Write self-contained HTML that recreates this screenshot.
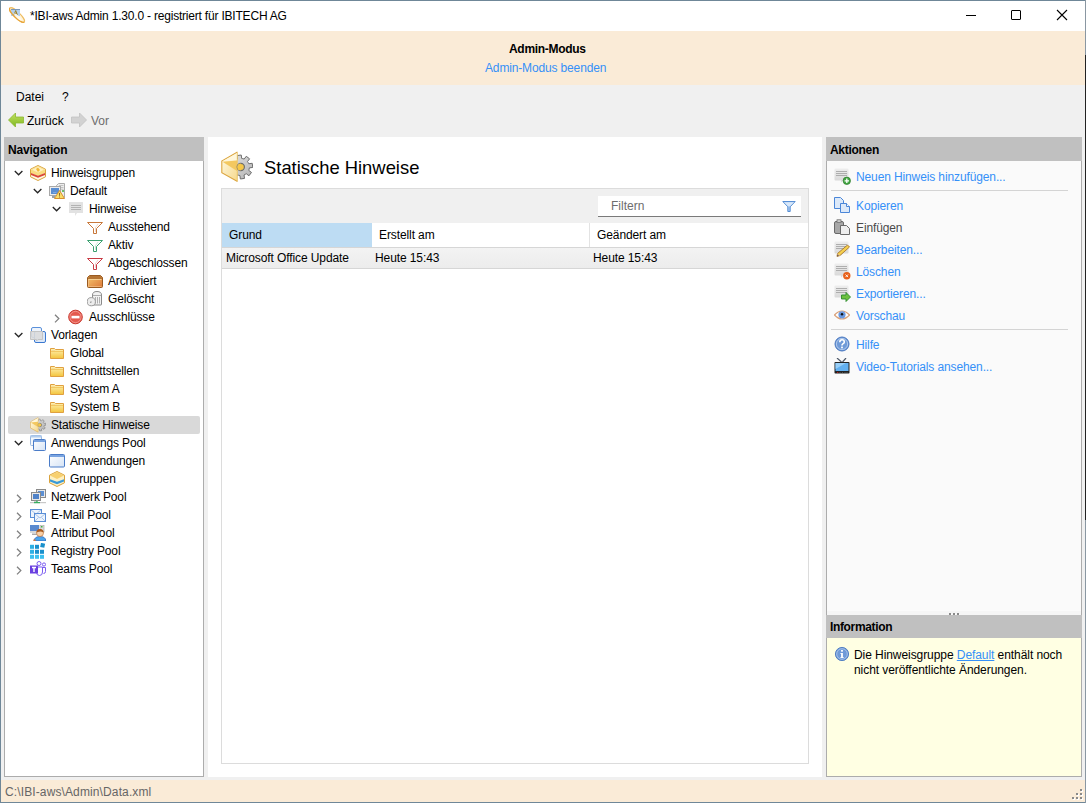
<!DOCTYPE html>
<html><head><meta charset="utf-8">
<style>
*{box-sizing:border-box;margin:0;padding:0}
html,body{width:1086px;height:803px;overflow:hidden}
body{position:relative;background:#f0f0f0;font-family:"Liberation Sans",sans-serif;font-size:12px;color:#000}
.a{position:absolute}
.t{position:absolute;white-space:nowrap;line-height:14px;height:14px}
.lnk{color:#3590f8}
.ico{position:absolute}
</style></head><body>
<svg width="0" height="0" style="position:absolute">
<defs>
<linearGradient id="gy" x1="0" y1="0" x2="0" y2="1"><stop offset="0" stop-color="#fff6cf"/><stop offset="1" stop-color="#f5c54a"/></linearGradient>
<linearGradient id="gor" x1="0" y1="0" x2="0" y2="1"><stop offset="0" stop-color="#f4b860"/><stop offset="1" stop-color="#d8782a"/></linearGradient>
<linearGradient id="gbl" x1="0" y1="0" x2="1" y2="1"><stop offset="0" stop-color="#ffffff"/><stop offset="1" stop-color="#d5e3f5"/></linearGradient>
<linearGradient id="ggr" x1="0" y1="0" x2="0" y2="1"><stop offset="0" stop-color="#eeeeee"/><stop offset="1" stop-color="#d6d6d6"/></linearGradient>
<linearGradient id="gfold" x1="0" y1="0" x2="0" y2="1"><stop offset="0" stop-color="#fff3b8"/><stop offset="1" stop-color="#f3c43c"/></linearGradient>
<symbol id="hex" viewBox="0 0 16 16">
 <path d="M8 0.5L15.5 4.2V11.8L8 15.5L0.5 11.8V4.2Z" fill="#fff8e0" stroke="#d9a23c"/>
 <path d="M1 4.5L8 1L15 4.5V8L8 11L1 8Z" fill="#f9dc80"/>
 <path d="M2 4.8L8 1.8L14 4.8L8 7.5Z" fill="#fff0c0"/>
 <path d="M6 4L8 2.5L10 5L8 7Z" fill="#f2b838"/>
 <path d="M1 8L8 10.8L15 8V10L8 12.8L1 10Z" fill="#d9463a"/>
</symbol>
<symbol id="hexb" viewBox="0 0 16 16">
 <path d="M8 0.5L15.5 4.2V11.8L8 15.5L0.5 11.8V4.2Z" fill="#fdf0c4" stroke="#d9a23c"/>
 <path d="M1 4.5L8 1L15 4.5L8 8Z" fill="#f7d070"/>
 <path d="M1 8.2L8 10.8L15 8.2V10.5L8 13.2L1 10.5Z" fill="#3a9ad8"/>
</symbol>
<symbol id="default" viewBox="0 0 16 16">
 <path d="M9.5 0.5H15.5V14.5H7.5V2.5Z" fill="#eeeeee" stroke="#ababab"/>
 <rect x="10" y="2" width="4.5" height="0.8" fill="#b8b8b8"/><rect x="11" y="4" width="3.5" height="0.8" fill="#b8b8b8"/><rect x="11" y="5.8" width="3.5" height="0.8" fill="#b8b8b8"/>
 <circle cx="14" cy="8" r="1" fill="#3cb040"/>
 <rect x="0.5" y="3.5" width="11" height="9" fill="#ececec" stroke="#a8a8a8"/>
 <rect x="2" y="5" width="8" height="6" fill="#5a8ed2"/>
 <rect x="4" y="9.2" width="3.5" height="0.6" fill="#9ab8e8"/>
 <rect x="3" y="13" width="3" height="2" fill="#9aa0a8"/>
 <path d="M10.5 7.5L15.5 15.5H5.5Z" fill="#f8de68" stroke="#d8902e" stroke-linejoin="round"/>
 <rect x="10" y="10" width="1" height="2.8" fill="#9a6a20"/><rect x="10" y="13.5" width="1" height="1" fill="#9a6a20"/>
</symbol>
<symbol id="bubble" viewBox="0 0 16 16">
 <path d="M1.5 1H14.5Q15 1 15 1.5V11.5Q15 12 14.5 12H9L7 15V12H1.5Q1 12 1 11.5V1.5Q1 1 1.5 1Z" fill="#e2e2e2"/>
 <rect x="3" y="4" width="10" height="1" fill="#b3b3b3"/><rect x="3" y="6" width="10" height="1" fill="#b3b3b3"/><rect x="3" y="8" width="10" height="1" fill="#b3b3b3"/>
</symbol>
<symbol id="funnel" viewBox="0 0 16 16">
 <path d="M0.5 3.5H15.5L9.5 9.5V14.5H6.5V9.5Z" fill="#fff" stroke="currentColor" stroke-width="1" stroke-linejoin="miter"/>
 <path d="M11 5L8.5 8.5V13" stroke="currentColor" stroke-opacity="0.25" fill="none"/>
</symbol>
<symbol id="archive" viewBox="0 0 16 16">
 <defs><linearGradient id="garch" x1="0" y1="0" x2="1" y2="1"><stop offset="0" stop-color="#f6c870"/><stop offset="1" stop-color="#dc7838"/></linearGradient></defs>
 <path d="M2.5 2.5H13.5L15.5 4.5V13.5Q15.5 14.5 14.5 14.5H1.5Q0.5 14.5 0.5 13.5V4.5Z" fill="url(#garch)" stroke="#9a5a20"/>
 <path d="M1 4.5L2.5 3H13.5L15 4.5V6H1Z" fill="#b47434"/>
 <path d="M1.5 6.5H14.5" stroke="#f8d8a0" stroke-width="0.8"/>
 <path d="M1.5 6.5V13.5H14.5" fill="none" stroke="#f6c890" stroke-width="0.6"/>
</symbol>
<symbol id="trash" viewBox="0 0 16 16">
 <path d="M5.5 13.5V4Q5.5 0.5 10 0.5Q14.5 0.5 14.5 4V13.5Q14.5 14 14 14H6Q5.5 14 5.5 13.5Z" fill="#f2f2f2" stroke="#8a8a8a"/>
 <path d="M5.5 4.5H14.5" stroke="#9a9a9a" stroke-width="0.8"/>
 <path d="M8.5 6V12.5M10.5 6V12.5M12.5 6V12.5" stroke="#a8a8a8" stroke-width="0.9"/>
 <circle cx="4.3" cy="10.7" r="4.1" fill="#ececec" stroke="#9a9a9a"/>
 <path d="M3 11.3L4.6 11" stroke="#7a7a7a" stroke-width="0.9"/>
</symbol>
<symbol id="nogo" viewBox="0 0 16 16">
 <circle cx="7.5" cy="8" r="6.8" fill="#e45a4e" stroke="#c83a30"/>
 <circle cx="7.5" cy="8" r="5.6" fill="none" stroke="#f5a098" stroke-width="0.8"/>
 <rect x="3.5" y="6.8" width="8" height="2.6" fill="#fff"/>
</symbol>
<symbol id="vorlagen" viewBox="0 0 16 16">
 <rect x="1.5" y="0.5" width="10" height="10" rx="1.5" fill="#eef4fc" stroke="#5a90da"/>
 <rect x="4.5" y="4.5" width="11" height="11" rx="1.5" fill="#dce8f8" stroke="#3a78d0"/>
 <path d="M0.5 4.5H12.5V12.5H8L6.5 14V12.5H0.5Z" fill="#dcdcdc" fill-opacity="0.9" stroke="#c4c4c4"/>
</symbol>
<symbol id="folder" viewBox="0 0 16 16">
 <path d="M1.5 3.5H5.5L6.5 4.5H14.5V13.5H1.5Z" fill="url(#gfold)" stroke="#e0a040"/>
 <path d="M2 6.5H14" stroke="#f2c862"/>
 <rect x="2.5" y="5" width="3.5" height="1" fill="#f5dc98"/>
</symbol>
<symbol id="statisch" viewBox="0 0 32 32">
<defs><linearGradient id="gbox" x1="0" y1="0" x2="1" y2="1"><stop offset="0" stop-color="#fffbe8"/><stop offset="1" stop-color="#f6d88a"/></linearGradient>
<linearGradient id="ggear" x1="0" y1="0" x2="1" y2="1"><stop offset="0" stop-color="#e2e2e2"/><stop offset="1" stop-color="#b4b4b4"/></linearGradient></defs>
<path d="M15.50 8.55 L16.58 8.03 L16.09 4.59 L20.22 4.01 L20.70 7.45 L21.88 7.66 L22.03 7.69 L23.16 8.08 L25.25 5.31 L28.58 7.82 L26.48 10.59 L27.17 11.57 L27.25 11.70 L27.77 12.78 L31.21 12.29 L31.79 16.42 L28.35 16.90 L28.14 18.08 L28.11 18.23 L27.72 19.36 L30.49 21.45 L27.98 24.78 L25.21 22.68 L24.23 23.37 L24.10 23.45 L23.02 23.97 L23.51 27.41 L19.38 27.99 L18.90 24.55 L17.72 24.34 L17.57 24.31 L16.44 23.92 L14.35 26.69 L11.02 24.18 L13.12 21.41 L12.43 20.43 L12.35 20.30 L11.83 19.22 L8.39 19.71 L7.81 15.58 L11.25 15.10 L11.46 13.92 L11.49 13.77 L11.88 12.64 L9.11 10.55 L11.62 7.22 L14.39 9.32 L15.37 8.63Z" fill="url(#ggear)" stroke="#6e6e6e" stroke-width="1"/>
<path d="M0.8 10L16.5 1V30.5L0.8 21.8Z" fill="url(#gbox)"/><path d="M16.5 1L0.8 10V21.8L16.5 30.5" fill="none" stroke="#dba540" stroke-width="1.1"/>
<path d="M1.5 10.3L16 2V9.5Z" fill="#fff7dc"/>
<path d="M1.5 10.8L16 9.5V20Z" fill="#f3c860"/>
<path d="M16.3 2L16.3 30" stroke="#e8c060" stroke-width="0.8"/>
<circle cx="19.8" cy="16" r="3.6" fill="#f6c848" stroke="#6e6e6e" stroke-width="1.2"/>
<path d="M19.8 12.4A3.6 3.6 0 0 0 19.8 19.6Z" fill="#f6c848"/>
</symbol>
<symbol id="winstack" viewBox="0 0 16 16">
 <rect x="0.5" y="0.5" width="11" height="10" rx="1" fill="#f4f8fd" stroke="#98b8e0"/>
 <rect x="0.5" y="0.5" width="11" height="2" fill="#b0ccee"/>
 <rect x="3.5" y="4.5" width="12" height="11" rx="1" fill="url(#gbl)" stroke="#4a7cc8"/>
 <rect x="4" y="5" width="11" height="2" fill="#7aa4e0"/>
</symbol>
<symbol id="window" viewBox="0 0 16 16">
 <rect x="0.5" y="1.5" width="15" height="12.5" rx="1" fill="url(#gbl)" stroke="#4a7cc8"/>
 <rect x="1" y="2" width="14" height="2" fill="#7aa4e0"/>
</symbol>
<symbol id="network" viewBox="0 0 16 16">
 <rect x="6.5" y="0.5" width="9" height="8" fill="#e8e8e8" stroke="#8a8a8a"/>
 <rect x="8" y="2" width="6" height="5" fill="#5b8fd4"/>
 <rect x="1.5" y="3.5" width="9" height="8" fill="#e8e8e8" stroke="#8a8a8a"/>
 <rect x="3" y="5" width="6" height="5" fill="#4f82c8"/>
 <rect x="4" y="11.5" width="4" height="1" fill="#999"/>
 <rect x="0" y="13" width="16" height="1.2" fill="#c8c8c8"/>
 <rect x="4" y="13" width="6" height="1.2" fill="#38b060"/>
 <rect x="6.3" y="11.5" width="1.2" height="2" fill="#38b060"/>
</symbol>
<symbol id="mail" viewBox="0 0 16 16">
 <rect x="0.5" y="2.5" width="11" height="8" fill="#eef4fc" stroke="#5a8ed6"/>
 <path d="M1 3L6 7L11 3" fill="none" stroke="#a8c4ea"/>
 <rect x="4.5" y="6.5" width="11" height="8" fill="#eef4fc" stroke="#5a8ed6"/>
 <path d="M5 7L10 11L15 7M5 14L8.5 10.5M15 14L11.5 10.5" fill="none" stroke="#a8c4ea"/>
</symbol>
<symbol id="person" viewBox="0 0 16 16">
 <rect x="0" y="0" width="9" height="6" fill="#5a8ad0"/>
 <rect x="0" y="6" width="9" height="2" fill="#d8d8d8"/>
 <rect x="2" y="8.5" width="5" height="1.5" fill="#aaa"/>
 <rect x="10" y="0" width="4" height="7" fill="#ddd" stroke="#999" stroke-width="0.6"/>
 <rect x="11" y="1" width="1.5" height="1.5" fill="#40b040"/>
 <path d="M4 16Q4.5 11.5 10 11.5Q15.5 11.5 16 16Z" fill="#4aa4ec" stroke="#2a66c0" stroke-width="0.8"/>
 <circle cx="10" cy="8" r="3.5" fill="#f8d0a8" stroke="#b06a30" stroke-width="0.6"/>
 <path d="M6.5 7.5Q6.5 4 10 4Q13.5 4 13.5 7.5Q11 6 8 7Z" fill="#a85a20"/>
 <rect x="3.5" y="14.5" width="2" height="1.5" fill="#e07830"/>
</symbol>
<symbol id="registry" viewBox="0 0 16 16">
 <rect x="0" y="1.8" width="4" height="4" fill="#2eb0e4"/>
 <rect x="5" y="1.8" width="4" height="4" fill="#1a90cc"/>
 <g transform="rotate(12 12.5 2.5)"><rect x="10.5" y="0.2" width="4.2" height="4.2" fill="#1a90cc"/></g>
 <rect x="0" y="6.8" width="4" height="4" fill="#2eb0e4"/>
 <rect x="5" y="6.8" width="4" height="4" fill="#1a90cc"/>
 <rect x="10" y="6.8" width="4" height="4" fill="#1a90cc"/>
 <rect x="0" y="11.8" width="4" height="4" fill="#3cc0f0"/>
 <rect x="5" y="11.8" width="4" height="4" fill="#3cc0f0"/>
 <rect x="10" y="11.8" width="4" height="4" fill="#3cc0f0"/>
</symbol>
<symbol id="teams" viewBox="0 0 16 16">
 <circle cx="9" cy="2.5" r="2" fill="none" stroke="#7b5cf0" stroke-width="1"/>
 <circle cx="14" cy="3.5" r="1.6" fill="none" stroke="#7b5cf0" stroke-width="1"/>
 <path d="M6.5 6H12.5V11Q12.5 14.5 9.5 14.5Q6.5 14.5 6.5 11Z" fill="#fff" stroke="#7b5cf0"/>
 <path d="M12.5 6.5H15.5V10.5Q15.5 12.5 13.5 12.5" fill="none" stroke="#7b5cf0"/>
 <rect x="0" y="4.5" width="8" height="8" fill="#6a3fe0"/>
 <path d="M2 6.5H6M4 6.5V11" stroke="#fff" stroke-width="1.4"/>
</symbol>
<symbol id="doclines" viewBox="0 0 16 16">
 <path d="M1.5 0.5H13.5Q14.5 0.5 14.5 1.5V11.5Q14.5 12.5 13.5 12.5H9L7 14.5V12.5H1.5Q0.5 12.5 0.5 11.5V1.5Q0.5 0.5 1.5 0.5Z" fill="url(#ggr)"/>
 <rect x="2" y="3" width="11" height="0.9" fill="#a8a8a8"/><rect x="2" y="5" width="11" height="0.9" fill="#a8a8a8"/><rect x="2" y="7" width="11" height="0.9" fill="#a8a8a8"/>
</symbol>
<symbol id="copy" viewBox="0 0 16 16">
 <path d="M0.5 0.5H6.5L9.5 3.5V11.5H0.5Z" fill="#dce9f9" stroke="#4a86d8"/>
 <path d="M6.5 6.5H12.5L15.5 9.5V15.5H6.5Z" fill="#dce9f9" stroke="#4a86d8"/>
 <path d="M12.5 6.5V9.5H15.5" fill="#fff" stroke="#4a86d8"/>
</symbol>
<symbol id="paste" viewBox="0 0 16 16">
 <rect x="0.5" y="2.5" width="9" height="12" rx="1.5" fill="#a8a8a8" stroke="#6a6a6a"/>
 <rect x="3" y="0.8" width="4" height="2.5" fill="#d8d8d8" stroke="#6a6a6a" stroke-width="0.8"/>
 <path d="M6.5 6.5H12.5L15.5 9.5V15.5H6.5Z" fill="#eeeeee" stroke="#6a6a6a"/>
</symbol>
<symbol id="pencil" viewBox="0 0 16 16">
 <path d="M13.5 4L15.5 6L6 14.5L3 15.5L3.5 12.5Z" fill="#f5d050" stroke="#a06a20" stroke-width="0.8"/>
 <path d="M3.5 12.5L3 15.5L6 14.5Z" fill="#f0c8a0"/>
 <path d="M3 15.5L3.8 13.3L4.8 14.6Z" fill="#403020"/>
</symbol>
<symbol id="eye" viewBox="0 0 16 16">
 <path d="M0.5 8Q8 0 15.5 8Q8 16 0.5 8Z" fill="#fff" stroke="#d8a078" stroke-width="1.2"/>
 <circle cx="8" cy="7.8" r="3.6" fill="#6a98e0"/>
 <circle cx="8" cy="7.3" r="1.2" fill="#111"/>
</symbol>
<symbol id="help" viewBox="0 0 16 16">
 <circle cx="8" cy="8" r="7" fill="#6f9ad8" stroke="#4a78c0" stroke-width="1"/>
 <circle cx="8" cy="8" r="5.6" fill="none" stroke="#c8daf2" stroke-width="0.7"/>
 <path d="M5.8 6.2Q5.8 3.8 8 3.8Q10.3 3.8 10.3 6Q10.3 7.2 8.8 7.9Q8 8.4 8 9.6" fill="none" stroke="#fff" stroke-width="1.6"/>
 <rect x="7.1" y="10.6" width="1.8" height="1.7" fill="#fff"/>
</symbol>
<symbol id="tv" viewBox="0 0 16 16">
 <path d="M3 0L7.5 4M12 0L8.5 4" stroke="#505a6a" stroke-width="1.2"/>
 <rect x="0.5" y="4" width="15" height="11.5" rx="0.8" fill="#222"/>
 <rect x="1.5" y="5" width="13" height="8" fill="#62b0f0"/>
 <path d="M1.5 5H12L1.5 11Z" fill="#98cff8"/>
 <rect x="3" y="14" width="1.3" height="0.8" fill="#e02020"/>
 <rect x="5.5" y="14" width="1" height="0.6" fill="#777"/><rect x="8" y="14" width="1" height="0.6" fill="#777"/><rect x="10.5" y="14" width="1" height="0.6" fill="#777"/><rect x="12.5" y="14" width="1" height="0.6" fill="#777"/>
</symbol>
</defs></svg>


<!-- window borders -->
<div class="a" style="left:0;top:0;width:1086px;height:1px;background:#6f8798"></div>
<div class="a" style="left:0;top:0;width:1px;height:803px;background:#6f8798"></div>
<div class="a" style="left:0;top:802px;width:1086px;height:1px;background:#6f8798"></div>
<div class="a" style="left:1085px;top:0;width:1px;height:803px;background:#8a97a2"></div>
<div class="a" style="left:1085px;top:55px;width:1px;height:465px;background:#222"></div>

<!-- title bar -->
<div class="a" style="left:1px;top:1px;width:1084px;height:30px;background:#fff"></div>
<svg class="a" style="left:9px;top:7px" width="17" height="17" viewBox="0 0 17 17"><g transform="rotate(44 8 8)"><ellipse cx="8" cy="8" rx="10" ry="2.9" fill="#fff4d8" stroke="#eebc60" stroke-width="1.1"/></g><rect x="2" y="2" width="9" height="7" fill="#b4d0ee"/><rect x="2" y="2" width="9" height="1" fill="#7a98b8"/><path d="M5 8L6.7 3.5L8.4 8M5.6 6.6H7.8" stroke="#a08020" stroke-width="1" fill="none"/><g transform="rotate(44 8 8)"><path d="M-2 8A10 2.9 0 0 0 18 8" fill="none" stroke="#e8a438" stroke-width="1.3"/><ellipse cx="10" cy="8.9" rx="5" ry="1.3" fill="#fffaf0" opacity="0.9"/></g></svg>
<div id="title" class="t" style="left:30px;top:9px;letter-spacing:-0.2px">*IBI-aws Admin 1.30.0 - registriert für IBITECH AG</div>
<!-- window controls -->
<div class="a" style="left:966px;top:15px;width:10px;height:1px;background:#000"></div>
<div class="a" style="left:1011px;top:10px;width:10px;height:10px;border:1px solid #000;border-radius:1px"></div>
<svg class="a" style="left:1056px;top:9px" width="12" height="12" viewBox="0 0 12 12"><path d="M1 1L11 11M11 1L1 11" stroke="#000" stroke-width="1.1"/></svg>

<!-- admin banner -->
<div class="a" style="left:1px;top:31px;width:1084px;height:54px;background:#faebd7"></div>
<div class="t" style="left:509px;top:42px;font-weight:bold;letter-spacing:-0.3px">Admin-Modus</div>
<div class="t lnk" style="left:485px;top:61px;letter-spacing:-0.15px">Admin-Modus beenden</div>

<!-- menu -->
<div class="t" style="left:16px;top:90px">Datei</div>
<div class="t" style="left:62px;top:90px">?</div>

<!-- toolbar -->
<svg class="a" style="left:8px;top:112px" width="16" height="16" viewBox="0 0 16 16"><defs><linearGradient id="garr" x1="0" y1="0" x2="0" y2="1"><stop offset="0" stop-color="#c4e060"/><stop offset="1" stop-color="#7cb820"/></linearGradient></defs><path d="M0.5 8L7.5 1V5H15.5V11H7.5V15Z" fill="url(#garr)" stroke="#8ab830" stroke-width="0.8" stroke-linejoin="round"/></svg>
<div class="t" style="left:27px;top:114px">Zurück</div>
<svg class="a" style="left:71px;top:112px" width="16" height="16" viewBox="0 0 16 16"><path d="M15.5 8L8.5 1V5H0.5V11H8.5V15Z" fill="#d2d2d2" stroke="#c2c2c2" stroke-width="0.8" stroke-linejoin="round"/></svg>
<div class="t" style="left:91px;top:114px;color:#6d6d6d">Vor</div>

<!-- navigation panel -->
<div class="a" style="left:4px;top:137px;width:200px;height:640px;background:#fff;border:1px solid #acacac;border-top:none"></div>
<div class="a" style="left:4px;top:137px;width:200px;height:24px;background:#c0c0c0"></div>
<div class="t" style="left:8px;top:143px;font-weight:bold;letter-spacing:-0.2px">Navigation</div>
<svg class="a" style="left:14px;top:170px" width="10" height="7" viewBox="0 0 10 7"><path d="M0.8 1L4.6 4.8L8.4 1" fill="none" stroke="#262626" stroke-width="1.3"/></svg>
<svg class="a" style="left:30px;top:165px;" width="16" height="16"><use href="#hex"/></svg>
<div class="t" style="left:51px;top:166px;letter-spacing:-0.15px">Hinweisgruppen</div>
<svg class="a" style="left:33px;top:188px" width="10" height="7" viewBox="0 0 10 7"><path d="M0.8 1L4.6 4.8L8.4 1" fill="none" stroke="#262626" stroke-width="1.3"/></svg>
<svg class="a" style="left:49px;top:183px;" width="16" height="16"><use href="#default"/></svg>
<div class="t" style="left:70px;top:184px;letter-spacing:-0.15px">Default</div>
<svg class="a" style="left:52px;top:206px" width="10" height="7" viewBox="0 0 10 7"><path d="M0.8 1L4.6 4.8L8.4 1" fill="none" stroke="#262626" stroke-width="1.3"/></svg>
<svg class="a" style="left:68px;top:201px;" width="16" height="16"><use href="#bubble"/></svg>
<div class="t" style="left:89px;top:202px;letter-spacing:-0.15px">Hinweise</div>
<svg class="a" style="left:87px;top:219px;color:#c8783a" width="16" height="16"><use href="#funnel"/></svg>
<div class="t" style="left:108px;top:220px;letter-spacing:-0.15px">Ausstehend</div>
<svg class="a" style="left:87px;top:237px;color:#3aa070" width="16" height="16"><use href="#funnel"/></svg>
<div class="t" style="left:108px;top:238px;letter-spacing:-0.15px">Aktiv</div>
<svg class="a" style="left:87px;top:255px;color:#c83a44" width="16" height="16"><use href="#funnel"/></svg>
<div class="t" style="left:108px;top:256px;letter-spacing:-0.15px">Abgeschlossen</div>
<svg class="a" style="left:87px;top:273px;" width="16" height="16"><use href="#archive"/></svg>
<div class="t" style="left:108px;top:274px;letter-spacing:-0.15px">Archiviert</div>
<svg class="a" style="left:87px;top:291px;" width="16" height="16"><use href="#trash"/></svg>
<div class="t" style="left:108px;top:292px;letter-spacing:-0.15px">Gelöscht</div>
<svg class="a" style="left:54px;top:314px" width="7" height="10" viewBox="0 0 7 10"><path d="M1 0.8L4.8 4.6L1 8.4" fill="none" stroke="#808080" stroke-width="1.3"/></svg>
<svg class="a" style="left:68px;top:309px;" width="16" height="16"><use href="#nogo"/></svg>
<div class="t" style="left:89px;top:310px;letter-spacing:-0.15px">Ausschlüsse</div>
<svg class="a" style="left:14px;top:332px" width="10" height="7" viewBox="0 0 10 7"><path d="M0.8 1L4.6 4.8L8.4 1" fill="none" stroke="#262626" stroke-width="1.3"/></svg>
<svg class="a" style="left:30px;top:327px;" width="16" height="16"><use href="#vorlagen"/></svg>
<div class="t" style="left:51px;top:328px;letter-spacing:-0.15px">Vorlagen</div>
<svg class="a" style="left:49px;top:345px;" width="16" height="16"><use href="#folder"/></svg>
<div class="t" style="left:70px;top:346px;letter-spacing:-0.15px">Global</div>
<svg class="a" style="left:49px;top:363px;" width="16" height="16"><use href="#folder"/></svg>
<div class="t" style="left:70px;top:364px;letter-spacing:-0.15px">Schnittstellen</div>
<svg class="a" style="left:49px;top:381px;" width="16" height="16"><use href="#folder"/></svg>
<div class="t" style="left:70px;top:382px;letter-spacing:-0.15px">System A</div>
<svg class="a" style="left:49px;top:399px;" width="16" height="16"><use href="#folder"/></svg>
<div class="t" style="left:70px;top:400px;letter-spacing:-0.15px">System B</div>
<div class="a" style="left:8px;top:416px;width:192px;height:18px;background:#d9d9d9;border-radius:2px"></div>
<svg class="a" style="left:30px;top:417px;" width="16" height="16"><use href="#statisch"/></svg>
<div class="t" style="left:51px;top:418px;letter-spacing:-0.15px">Statische Hinweise</div>
<svg class="a" style="left:14px;top:440px" width="10" height="7" viewBox="0 0 10 7"><path d="M0.8 1L4.6 4.8L8.4 1" fill="none" stroke="#262626" stroke-width="1.3"/></svg>
<svg class="a" style="left:30px;top:435px;" width="16" height="16"><use href="#winstack"/></svg>
<div class="t" style="left:51px;top:436px;letter-spacing:-0.15px">Anwendungs Pool</div>
<svg class="a" style="left:49px;top:453px;" width="16" height="16"><use href="#window"/></svg>
<div class="t" style="left:70px;top:454px;letter-spacing:-0.15px">Anwendungen</div>
<svg class="a" style="left:49px;top:471px;" width="16" height="16"><use href="#hexb"/></svg>
<div class="t" style="left:70px;top:472px;letter-spacing:-0.15px">Gruppen</div>
<svg class="a" style="left:16px;top:494px" width="7" height="10" viewBox="0 0 7 10"><path d="M1 0.8L4.8 4.6L1 8.4" fill="none" stroke="#808080" stroke-width="1.3"/></svg>
<svg class="a" style="left:30px;top:489px;" width="16" height="16"><use href="#network"/></svg>
<div class="t" style="left:51px;top:490px;letter-spacing:-0.15px">Netzwerk Pool</div>
<svg class="a" style="left:16px;top:512px" width="7" height="10" viewBox="0 0 7 10"><path d="M1 0.8L4.8 4.6L1 8.4" fill="none" stroke="#808080" stroke-width="1.3"/></svg>
<svg class="a" style="left:30px;top:507px;" width="16" height="16"><use href="#mail"/></svg>
<div class="t" style="left:51px;top:508px;letter-spacing:-0.15px">E-Mail Pool</div>
<svg class="a" style="left:16px;top:530px" width="7" height="10" viewBox="0 0 7 10"><path d="M1 0.8L4.8 4.6L1 8.4" fill="none" stroke="#808080" stroke-width="1.3"/></svg>
<svg class="a" style="left:30px;top:525px;" width="16" height="16"><use href="#person"/></svg>
<div class="t" style="left:51px;top:526px;letter-spacing:-0.15px">Attribut Pool</div>
<svg class="a" style="left:16px;top:548px" width="7" height="10" viewBox="0 0 7 10"><path d="M1 0.8L4.8 4.6L1 8.4" fill="none" stroke="#808080" stroke-width="1.3"/></svg>
<svg class="a" style="left:30px;top:543px;" width="16" height="16"><use href="#registry"/></svg>
<div class="t" style="left:51px;top:544px;letter-spacing:-0.15px">Registry Pool</div>
<svg class="a" style="left:16px;top:566px" width="7" height="10" viewBox="0 0 7 10"><path d="M1 0.8L4.8 4.6L1 8.4" fill="none" stroke="#808080" stroke-width="1.3"/></svg>
<svg class="a" style="left:30px;top:561px;" width="16" height="16"><use href="#teams"/></svg>
<div class="t" style="left:51px;top:562px;letter-spacing:-0.15px">Teams Pool</div>

<!-- middle panel -->
<div class="a" style="left:208px;top:137px;width:614px;height:640px;background:#fff"></div>
<svg class="a" style="left:221px;top:151px" width="32" height="32"><use href="#statisch"/></svg>
<div class="t" style="left:264px;top:157px;font-size:18.4px;line-height:22px;height:22px">Statische Hinweise</div>
<div class="a" style="left:221px;top:188px;width:588px;height:576px;border:1px solid #dcdcdc;background:#fff"></div>
<div class="a" style="left:222px;top:189px;width:586px;height:34px;background:#f0f0f0"></div>
<div class="a" style="left:598px;top:196px;width:203px;height:21px;background:#fff;border-bottom:1px solid #7a7a7a"></div>
<div class="t" style="left:611px;top:199px;color:#6d6d6d">Filtern</div>
<svg class="a" style="left:782px;top:200px" width="14" height="13" viewBox="0 0 14 13"><path d="M0.8 1.5H13.2L8.2 6.8V11.5H5.8V6.8Z" fill="#a8c8f0" stroke="#4a86d0" stroke-width="0.9"/><path d="M2 2.2H12L8 6.2H6Z" fill="#d8e8fa"/></svg>
<!-- header row -->
<div class="a" style="left:222px;top:223px;width:150px;height:24px;background:#bddcf3"></div>
<div class="a" style="left:372px;top:223px;width:436px;height:24px;background:#fff"></div>
<div class="a" style="left:589px;top:223px;width:1px;height:24px;background:#e3e3e3"></div>
<div class="a" style="left:222px;top:247px;width:586px;height:1px;background:#d6d6d6"></div>
<div class="t" style="left:229px;top:228px;letter-spacing:-0.1px">Grund</div>
<div class="t" style="left:379px;top:228px;letter-spacing:-0.1px">Erstellt am</div>
<div class="t" style="left:597px;top:228px;letter-spacing:-0.1px">Geändert am</div>
<!-- data row -->
<div class="a" style="left:222px;top:248px;width:586px;height:20px;background:linear-gradient(#f3f3f3,#ececec)"></div>
<div class="a" style="left:222px;top:268px;width:586px;height:1px;background:#d6d6d6"></div>
<div class="t" style="left:226px;top:251px;letter-spacing:-0.1px">Microsoft Office Update</div>
<div class="t" style="left:375px;top:251px;letter-spacing:-0.1px">Heute 15:43</div>
<div class="t" style="left:593px;top:251px;letter-spacing:-0.1px">Heute 15:43</div>

<!-- actions panel -->
<div class="a" style="left:826px;top:137px;width:256px;height:478px;background:#fafafa;border-left:1px solid #acacac;border-right:1px solid #acacac"></div>
<div class="a" style="left:826px;top:137px;width:256px;height:24px;background:#c0c0c0"></div>
<div class="t" style="left:830px;top:143px;font-weight:bold;letter-spacing:-0.3px">Aktionen</div>
<svg class="a" style="left:834px;top:168px;" width="16" height="16"><use href="#doclines"/></svg>
<svg class="a" style="left:842px;top:176px" width="9" height="9" viewBox="0 0 9 9"><circle cx="4.8" cy="4.8" r="3.7" fill="#45a845" stroke="#2a7a2a" stroke-width="0.7"/><path d="M4.8 2.6V7M2.6 4.8H7" stroke="#fff" stroke-width="1.3"/></svg>
<div class="t lnk" style="left:856px;top:170px;letter-spacing:-0.12px">Neuen Hinweis hinzufügen...</div>
<svg class="a" style="left:834px;top:197px;" width="16" height="16"><use href="#copy"/></svg>
<div class="t lnk" style="left:856px;top:199px;letter-spacing:-0.12px">Kopieren</div>
<svg class="a" style="left:834px;top:219px;" width="16" height="16"><use href="#paste"/></svg>
<div class="t" style="left:856px;top:221px;color:#4a4a4a;letter-spacing:-0.12px">Einfügen</div>
<svg class="a" style="left:834px;top:241px;" width="16" height="16"><use href="#doclines"/></svg>
<svg class="a" style="left:834px;top:241px;" width="16" height="16"><use href="#pencil"/></svg>
<div class="t lnk" style="left:856px;top:243px;letter-spacing:-0.12px">Bearbeiten...</div>
<svg class="a" style="left:834px;top:263px;" width="16" height="16"><use href="#doclines"/></svg>
<svg class="a" style="left:842px;top:271px" width="9" height="9" viewBox="0 0 9 9"><circle cx="4.8" cy="4.8" r="3.7" fill="#e8601a"/><path d="M3.5 3.5L6.1 6.1M6.1 3.5L3.5 6.1" stroke="#fff" stroke-width="0.9"/></svg>
<div class="t lnk" style="left:856px;top:265px;letter-spacing:-0.12px">Löschen</div>
<svg class="a" style="left:834px;top:285px;" width="16" height="16"><use href="#doclines"/></svg>
<svg class="a" style="left:841px;top:292px" width="10" height="10" viewBox="0 0 10 10"><path d="M0.5 3H5V0.5L9.5 5L5 9.5V7H0.5Z" fill="#6cc040" stroke="#2a8a2a" stroke-width="0.9"/></svg>
<div class="t lnk" style="left:856px;top:287px;letter-spacing:-0.12px">Exportieren...</div>
<svg class="a" style="left:834px;top:307px;" width="16" height="16"><use href="#eye"/></svg>
<div class="t lnk" style="left:856px;top:309px;letter-spacing:-0.12px">Vorschau</div>
<svg class="a" style="left:834px;top:336px;" width="16" height="16"><use href="#help"/></svg>
<div class="t lnk" style="left:856px;top:338px;letter-spacing:-0.12px">Hilfe</div>
<svg class="a" style="left:834px;top:358px;" width="16" height="16"><use href="#tv"/></svg>
<div class="t lnk" style="left:856px;top:360px;letter-spacing:-0.12px">Video-Tutorials ansehen...</div>
<div class="a" style="left:831px;top:190px;width:237px;height:1px;background:#d4d4d4"></div>
<div class="a" style="left:831px;top:329px;width:237px;height:1px;background:#d4d4d4"></div>
<div class="a" style="left:827px;top:611px;width:254px;height:4px;background:#f5f5f5"></div>

<svg class="a" style="left:948px;top:612px" width="12" height="4"><g fill="#fff"><rect x="2" y="2" width="2" height="2"/><rect x="6" y="2" width="2" height="2"/><rect x="10" y="2" width="2" height="2"/></g><g fill="#8a8a8a"><rect x="1" y="1" width="2" height="2"/><rect x="5" y="1" width="2" height="2"/><rect x="9" y="1" width="2" height="2"/></g></svg>
<!-- information panel -->
<div class="a" style="left:826px;top:615px;width:256px;height:162px;background:#ffffe3;border:1px solid #acacac;border-top:none"></div>
<div class="a" style="left:826px;top:615px;width:256px;height:23px;background:#c0c0c0"></div>
<div class="t" style="left:830px;top:620px;font-weight:bold;letter-spacing:-0.35px">Information</div>
<svg class="a" style="left:834px;top:646px" width="16" height="16" viewBox="0 0 16 16"><circle cx="8" cy="8" r="6.6" fill="#6f9ad8" stroke="#4a78c0" stroke-width="0.9"/><circle cx="8" cy="8" r="5.3" fill="none" stroke="#c8daf2" stroke-width="0.6"/><rect x="7.1" y="4" width="1.8" height="1.7" fill="#fff"/><path d="M6.3 7H8.9V11.2H9.8V12H6.3V11.2H7.1V7.8H6.3Z" fill="#fff"/></svg>
<div class="t" style="left:854px;top:648px;line-height:15px;height:auto;letter-spacing:-0.07px">Die Hinweisgruppe <span class="lnk" style="text-decoration:underline">Default</span> enthält noch<br>nicht veröffentlichte Änderungen.</div>

<!-- status bar -->
<div class="a" style="left:1px;top:780px;width:1084px;height:22px;background:#faebd7"></div>
<div class="t" style="left:5px;top:785px;color:#666;letter-spacing:0.12px">C:\IBI-aws\Admin\Data.xml</div>
<svg class="a" style="left:1071px;top:788px" width="14" height="14"><g fill="#fff"><rect x="10" y="2" width="2" height="2"/><rect x="6" y="6" width="2" height="2"/><rect x="10" y="6" width="2" height="2"/><rect x="2" y="10" width="2" height="2"/><rect x="6" y="10" width="2" height="2"/><rect x="10" y="10" width="2" height="2"/></g><g fill="#8a8a8a"><rect x="9" y="1" width="2" height="2"/><rect x="5" y="5" width="2" height="2"/><rect x="9" y="5" width="2" height="2"/><rect x="1" y="9" width="2" height="2"/><rect x="5" y="9" width="2" height="2"/><rect x="9" y="9" width="2" height="2"/></g></svg>

</body></html>
